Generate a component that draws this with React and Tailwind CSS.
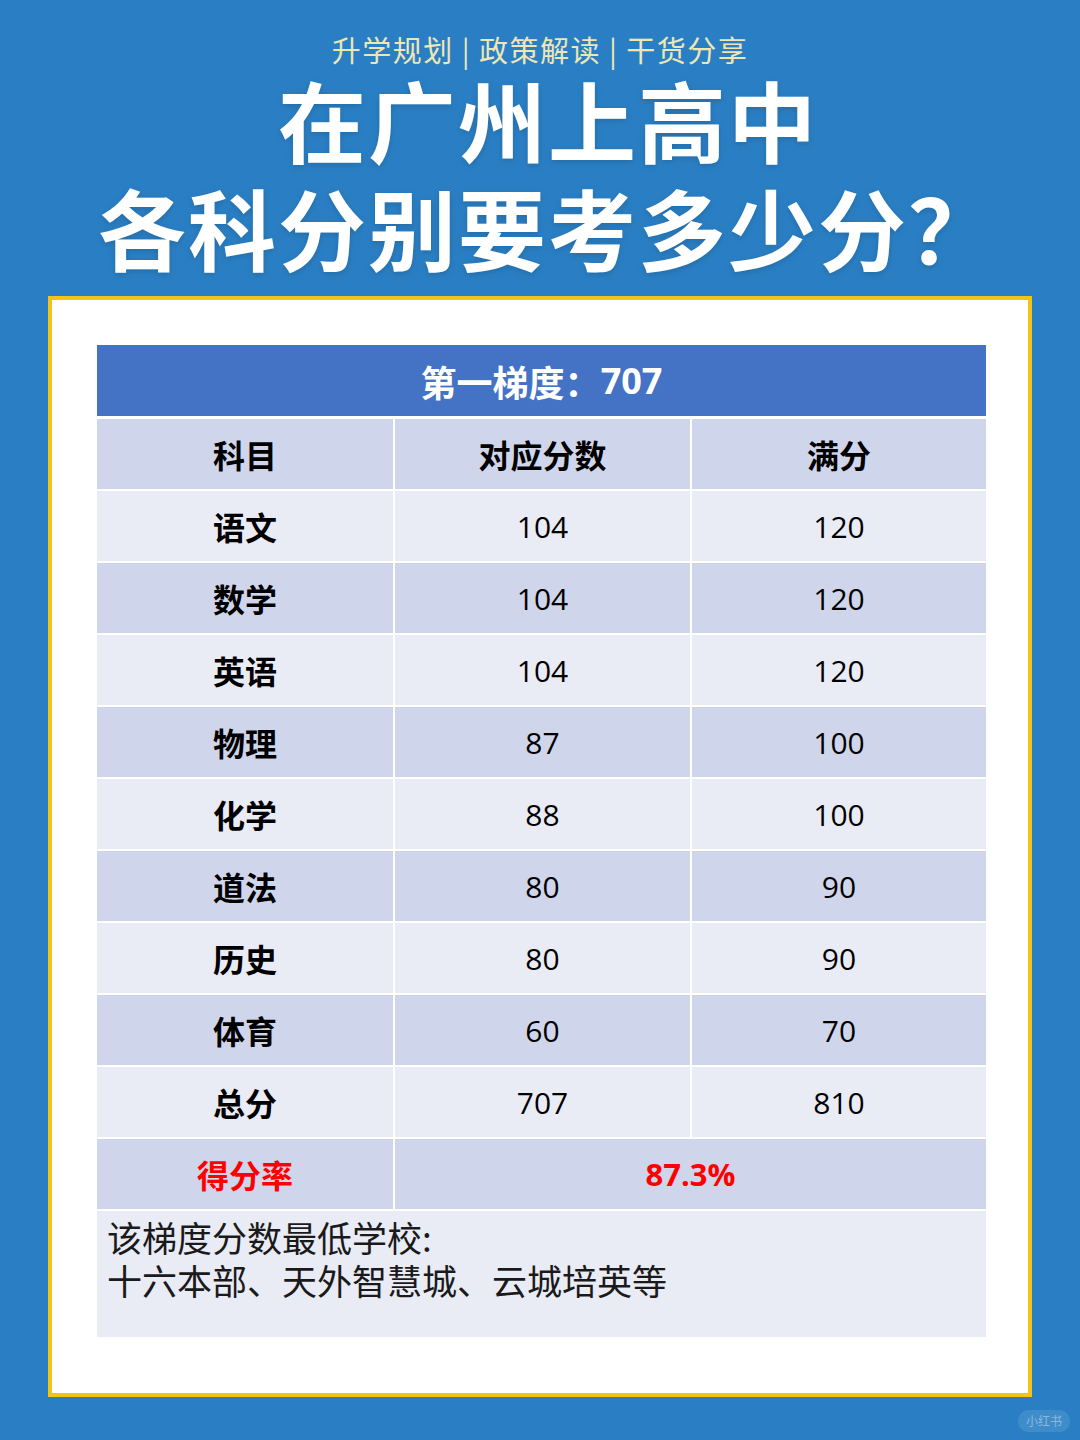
const rows = [
  ["语文", "104", "120"],
  ["数学", "104", "120"],
  ["英语", "104", "120"],
  ["物理", "87", "100"],
  ["化学", "88", "100"],
  ["道法", "80", "90"],
  ["历史", "80", "90"],
  ["体育", "60", "70"],
  ["总分", "707", "810"],
];

const cjk = "font-['Noto_Sans_CJK_SC',sans-serif]";
const num = "font-['Open_Sans','Noto_Sans_CJK_SC',sans-serif]";

const App = () => {
  return (
    <div className={`relative w-[1080px] h-[1440px] bg-[#2a7fc4] ${cjk} flex flex-col items-center overflow-hidden`}>
      <p className="mt-[28px] text-[29px] leading-[42px] text-[#eee6b4] tracking-[1.5px]">
        升学规划 | 政策解读 | 干货分享
      </p>
      <h1 className="-mt-[6px] pl-[16px] text-center text-white font-bold text-[88px] leading-[108px] tracking-[2px] drop-shadow-[0_2px_3px_rgba(0,0,0,0.15)]">
        <span className="block">在广州上高中</span>
        <span className="block">各科分别要考多少分？</span>
      </h1>

      <div className="mt-[16px] w-[984px] h-[1101px] bg-white border-4 border-[#f2c418] p-[45px] pb-0">
        <div className="w-[889px]">
          <div className="h-[71px] bg-[#4472c4] flex items-center justify-center text-white font-bold text-[36px]">
            <span>第一梯度：</span>
            <span className={num}>707</span>
          </div>

          <div className="grid grid-cols-[296px_297px_296px] h-[73px] border-t-[3px] border-white bg-[#cfd5ea] text-[32px] font-bold text-black">
            <div className="flex items-center justify-center">科目</div>
            <div className="flex items-center justify-center border-l-2 border-white">对应分数</div>
            <div className="flex items-center justify-center border-l-2 border-white">满分</div>
          </div>

          {rows.map((r, i) => (
            <div
              key={r[0]}
              className={`grid grid-cols-[296px_297px_296px] h-[72px] border-t-2 border-white text-black ${
                i % 2 === 0 ? "bg-[#e9ebf5]" : "bg-[#cfd5ea]"
              }`}
            >
              <div className="flex items-center justify-center text-[32px] font-bold">{r[0]}</div>
              <div className={`flex items-center justify-center border-l-2 border-white text-[30px] ${num}`}>{r[1]}</div>
              <div className={`flex items-center justify-center border-l-2 border-white text-[30px] ${num}`}>{r[2]}</div>
            </div>
          ))}

          <div className="grid grid-cols-[296px_593px] h-[72px] border-t-2 border-white bg-[#cfd5ea] text-[#ff0000] font-bold">
            <div className="flex items-center justify-center text-[32px]">得分率</div>
            <div className={`flex items-center justify-center border-l-2 border-white text-[31px] ${num}`}>87.3%</div>
          </div>

          <div className="h-[128px] border-t-2 border-white bg-[#e9ebf5] pl-[10px] pt-[4px] text-[35px] leading-[43px] text-[#1a1a1a]">
            <p>该梯度分数最低学校:</p>
            <p>十六本部、天外智慧城、云城培英等</p>
          </div>
        </div>
      </div>

      <div className="absolute right-[10px] bottom-[8px] rounded-full bg-white/10 px-[8px] py-[2px] text-[12px] text-white/40">
        小红书
      </div>
    </div>
  );
};

export default App;
